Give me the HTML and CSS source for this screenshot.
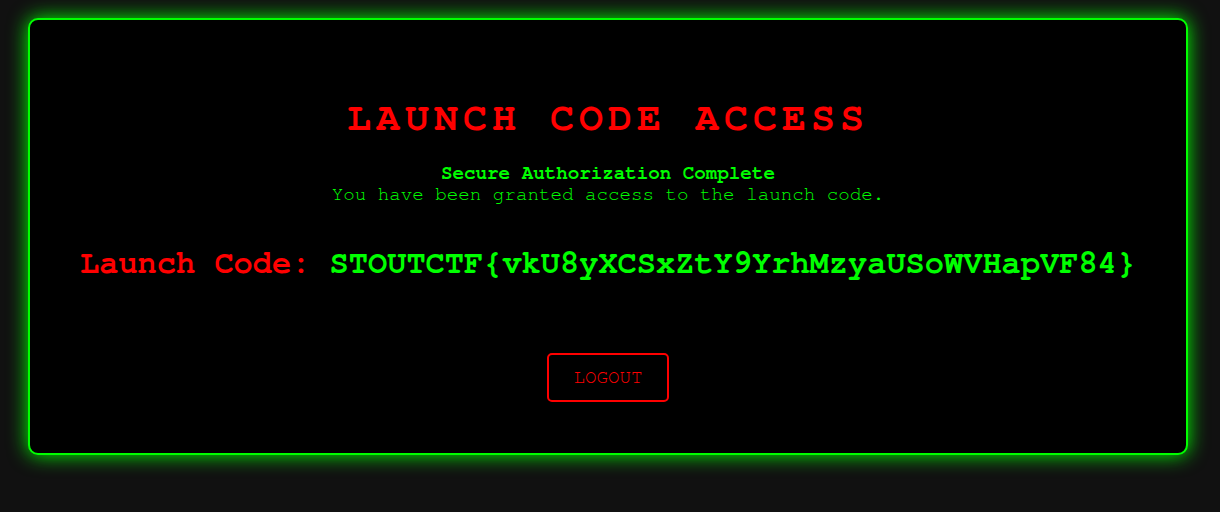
FILE: index.html
```html
<!DOCTYPE html>
<html lang="en">
<head>
<meta charset="utf-8">
<title>Launch Code Access</title>
<link rel="stylesheet" href="styles.css">
</head>
<body>
<div class="container">
  <h1 class="title">LAUNCH CODE ACCESS</h1>
  <div class="status">
    <p class="status-head">Secure Authorization Complete</p>
    <p class="status-text">You have been granted access to the launch code.</p>
  </div>
  <p class="code"><span class="code-label">Launch Code:</span> <span class="code-value">STOUTCTF{vkU8yXCSxZtY9YrhMzyaUSoWVHapVF84}</span></p>
  <div class="actions">
    <button class="logout" type="button">LOGOUT</button>
  </div>
</div>
</body>
</html>
```

FILE: styles.css
```css
html, body {
  margin: 0;
  padding: 0;
}
body {
  background: #111111;
  font-family: "Nimbus Mono PS", "Nimbus Mono L", "FreeMono", "Courier 10 Pitch", "Courier New", Courier, monospace;
  color: #00ff00;
  padding: 18px 32px 40px 28px;
}
.container {
  background: #000000;
  border: 2px solid #00ff00;
  border-radius: 10px;
  box-shadow: 0 0 20px #00ff00;
  padding: 78px 20px 51px;
  text-align: center;
  display: flex;
  flex-direction: column;
  align-items: center;
}
.title {
  margin: 0;
  color: #ff0000;
  font-size: 40px;
  font-weight: bold;
  letter-spacing: 5px;
  line-height: 40px;
}
.status {
  margin-top: 25px;
}
.status p {
  margin: 0;
  font-size: 19.2px;
  line-height: 21px;
}
.status-head {
  font-weight: bold;
}
.code {
  margin: 38px 0 0;
  font-size: 32px;
  font-weight: bold;
  line-height: 40px;
}
.code-label {
  color: #ff0000;
}
.code-value {
  color: #00ff00;
}
.actions {
  margin-top: 70px;
}
.logout {
  box-sizing: border-box;
  height: 49px;
  font-family: inherit;
  font-size: 19.2px;
  color: #ff0000;
  background: #000000;
  border: 2px solid #ff0000;
  border-radius: 5px;
  padding: 0 24px;
  line-height: 21px;
  cursor: pointer;
}
```
